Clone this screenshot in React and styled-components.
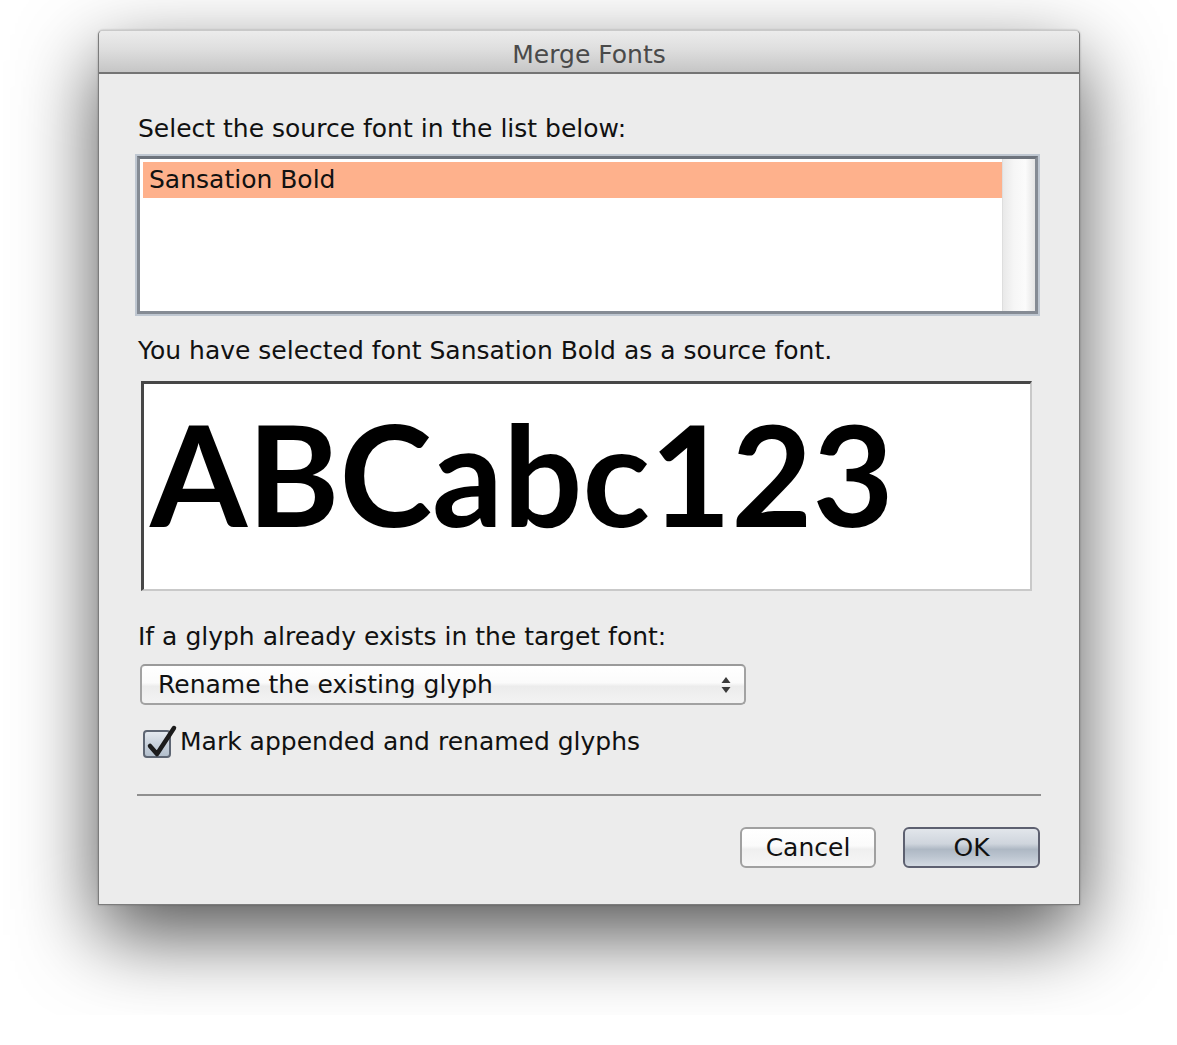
import React from "react";
import styled, { createGlobalStyle } from "styled-components";

const Global = createGlobalStyle`
  html, body { margin: 0; padding: 0; background: #ffffff; }
  body { font-family: "DejaVu Sans", "Liberation Sans", sans-serif; }
`;

const Stage = styled.div`
  padding: 30px 0 0 98px;
  height: 1015px;
  box-sizing: border-box;
`;

const Window = styled.div`
  width: 982px;
  box-sizing: border-box;
  border: 1px solid #7c7c7c;
  border-top-color: #c9c9c9;
  border-radius: 5px 5px 0 0;
  background: #ececec;
  box-shadow: 0 30px 80px rgba(0, 0, 0, 0.68), 0 0 2px rgba(0, 0, 0, 0.3);
`;

const TitleBar = styled.div`
  height: 43px;
  box-sizing: border-box;
  padding-top: 6px;
  border-bottom: 2px solid #747474;
  border-radius: 4px 4px 0 0;
  background: linear-gradient(to bottom, #ececec 0%, #dedede 45%, #c6c6c6 100%);
  text-align: center;
  font-size: 25px;
  line-height: 35px;
  color: #4a4a4a;
`;

const Body = styled.div`
  padding: 40px 39px 36px 39px;
  display: flex;
  flex-direction: column;
  font-size: 25px;
  line-height: 30px;
  color: #111;
`;

const Label = styled.div`
  margin-top: ${(p) => p.$mt || 0}px;
  white-space: nowrap;
`;

const ListBox = styled.div`
  margin: 12px 2px 0 -1px;
  height: 158px;
  box-sizing: border-box;
  border: 3px solid #858b94;
  border-top-color: #6d737c;
  box-shadow: 0 0 0 2px #bfc7d1;
  background: #fff;
  display: flex;
`;

const ListRows = styled.div`
  flex: 1;
  padding: 3px 0 0 3px;
`;

const ListRow = styled.div`
  height: 36px;
  line-height: 36px;
  padding-left: 6px;
  background: ${(p) => (p.$selected ? "#feb18c" : "transparent")};
  color: #111;
`;

const ScrollTrack = styled.div`
  width: 32px;
  border-left: 1px solid #dedede;
  background: linear-gradient(to right, #e9e9e9 0%, #f6f6f6 35%, #fbfbfb 70%, #e4e4e4 100%);
`;

const Preview = styled.div`
  margin: 15px 8px 0 3px;
  height: 210px;
  box-sizing: border-box;
  border-top: 3px solid #474747;
  border-left: 3px solid #474747;
  border-right: 2px solid #c9c9c9;
  border-bottom: 2px solid #c9c9c9;
  background: #fff;
  padding: 17px 0 0 6px;
  overflow: hidden;
`;

const Sample = styled.div`
  font-family: Lato, "Liberation Sans", sans-serif;
  font-weight: 700;
  font-size: 140px;
  line-height: 144px;
  color: #000;
  white-space: nowrap;
`;

const Select = styled.div`
  margin: 12px 0 0 2px;
  width: 606px;
  height: 41px;
  box-sizing: border-box;
  border: 2px solid #a2a2a2;
  border-top-color: #9a9a9a;
  border-radius: 5px;
  background: linear-gradient(to bottom, #ffffff 0%, #fbfbfb 45%, #ececec 55%, #f3f3f3 100%);
  display: flex;
  align-items: center;
  justify-content: space-between;
  padding: 0 12px 0 16px;
  line-height: 36px;
`;

const CheckRow = styled.label`
  margin: 19px 0 0 5px;
  height: 36px;
  display: flex;
  align-items: center;
  gap: 9px;
`;

const CheckBox = styled.span`
  position: relative;
  width: 28px;
  height: 28px;
  box-sizing: border-box;
  border: 2px solid #5e6673;
  border-radius: 4px;
  background: linear-gradient(to bottom, #e4e9ef 0%, #c9d2dc 50%, #b3bfcc 100%);
  margin-top: 4px;
`;

const CheckMark = styled.svg`
  position: absolute;
  left: -2px;
  top: -7px;
  overflow: visible;
`;

const Separator = styled.div`
  margin: 34px -1px 0 -1px;
  height: 2px;
  background: #8f8f8f;
`;

const ButtonRow = styled.div`
  margin-top: 31px;
  display: flex;
  justify-content: flex-end;
  gap: 27px;
`;

const Button = styled.button`
  width: ${(p) => p.$w}px;
  height: 41px;
  box-sizing: border-box;
  border-radius: 6px;
  font-family: "DejaVu Sans", "Liberation Sans", sans-serif;
  font-size: 25px;
  color: #111;
  padding: 0;
  border: 2px solid ${(p) => (p.$primary ? "#5d6070" : "#a0a0a0")};
  background: ${(p) =>
    p.$primary
      ? "linear-gradient(to bottom, #e2e6eb 0%, #cfd5dd 40%, #aeb8c4 55%, #bcc5d0 75%, #d3dae2 100%)"
      : "linear-gradient(to bottom, #ffffff 0%, #fbfbfb 45%, #efefef 55%, #f6f6f6 100%)"};
`;

export default function App() {
  return (
    <>
      <Global />
      <Stage>
        <Window>
          <TitleBar>Merge Fonts</TitleBar>
          <Body>
            <Label>Select the source font in the list below:</Label>
            <ListBox>
              <ListRows>
                <ListRow $selected>Sansation Bold</ListRow>
              </ListRows>
              <ScrollTrack />
            </ListBox>
            <Label $mt={22}>You have selected font Sansation Bold as a source font.</Label>
            <Preview>
              <Sample>ABCabc123</Sample>
            </Preview>
            <Label $mt={31}>If a glyph already exists in the target font:</Label>
            <Select>
              <span>Rename the existing glyph</span>
              <svg width="12" height="22" viewBox="0 0 12 22">
                <path d="M6 3 L10.5 9 L1.5 9 Z" fill="#3a3a3a" />
                <path d="M6 19 L10.5 13 L1.5 13 Z" fill="#3a3a3a" />
              </svg>
            </Select>
            <CheckRow>
              <CheckBox>
                <CheckMark width="34" height="36" viewBox="0 0 34 36">
                  <path
                    d="M7 21 L14 29 L31 3"
                    fill="none"
                    stroke="#1c1c1c"
                    strokeWidth="4.5"
                    strokeLinecap="round"
                    strokeLinejoin="round"
                  />
                </CheckMark>
              </CheckBox>
              <span>Mark appended and renamed glyphs</span>
            </CheckRow>
            <Separator />
            <ButtonRow>
              <Button $w={136}>Cancel</Button>
              <Button $w={137} $primary>OK</Button>
            </ButtonRow>
          </Body>
        </Window>
      </Stage>
    </>
  );
}
